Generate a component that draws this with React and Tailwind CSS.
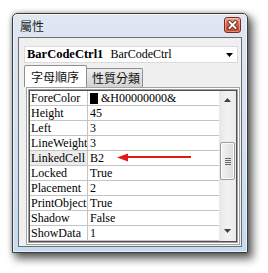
import React from "react";

const rows = [
  { name: "ForeColor", value: "&H00000000&", swatch: true },
  { name: "Height", value: "45" },
  { name: "Left", value: "3" },
  { name: "LineWeight", value: "3" },
  { name: "LinkedCell", value: "B2", sel: true },
  { name: "Locked", value: "True" },
  { name: "Placement", value: "2" },
  { name: "PrintObject", value: "True" },
  { name: "Shadow", value: "False" },
  { name: "ShowData", value: "1" },
];

function CloseButton() {
  return (
    <div className="mt-[3px] mr-[1px] w-[17px] h-[16px] rounded-[3px] border border-[#7a2a1c] bg-gradient-to-b from-[#eba795] via-[#d35a3f] to-[#c94a2e] flex items-center justify-center shadow-[inset_0_0_0_1px_rgba(255,255,255,0.35)]">
      <svg width="11" height="10" viewBox="0 0 11 10">
        <path d="M2.5 2 L8.5 8 M8.5 2 L2.5 8" stroke="#5a1a10" strokeWidth="3.6" strokeLinecap="square" />
        <path d="M2.5 2 L8.5 8 M8.5 2 L2.5 8" stroke="#ffffff" strokeWidth="2" strokeLinecap="square" />
      </svg>
    </div>
  );
}

function Scrollbar() {
  return (
    <div className="w-[17px] flex flex-col bg-gradient-to-r from-[#e6e6e6] via-[#f2f2f2] to-[#ebebeb]">
      <div className="h-[17px] flex items-center justify-center">
        <svg width="7" height="4" viewBox="0 0 7 4">
          <path d="M3.5 0 L7 4 L0 4 Z" fill="#404040" />
        </svg>
      </div>
      <div className="flex-1 pt-[34px] px-[1px]">
        <div className="h-[38px] rounded-[2px] border border-[#9c9c9c] bg-gradient-to-r from-[#f4f4f4] to-[#dcdcdc] flex flex-col items-center justify-center gap-[1px] shadow-[inset_0_0_0_1px_rgba(255,255,255,0.8)]">
          <div className="w-[6px] h-[1px] bg-[#6a6a6a]" />
          <div className="w-[6px] h-[1px] bg-[#6a6a6a]" />
          <div className="w-[6px] h-[1px] bg-[#6a6a6a]" />
          <div className="w-[6px] h-[1px] bg-[#6a6a6a]" />
        </div>
      </div>
      <div className="h-[17px] flex items-center justify-center pb-[3px]">
        <svg width="7" height="4" viewBox="0 0 7 4">
          <path d="M0 0 L7 0 L3.5 4 Z" fill="#404040" />
        </svg>
      </div>
    </div>
  );
}

export default function App() {
  return (
    <div className="relative w-[268px] h-[273px] bg-white pl-[12px] pt-[13px] overflow-hidden">
      <div className="w-[236px] h-[240px] border border-[#3c3c3c] rounded-t-[5px] bg-gradient-to-b from-[#dfe7f1] to-[#c6daf1] flex flex-col px-[5px] pb-[5px] shadow-[inset_0_0_0_1px_rgba(255,255,255,0.6),4px_5px_8px_1px_rgba(0,0,0,0.6),0_0_5px_rgba(0,0,0,0.3)]">
        {/* title bar */}
        <div className="h-[23px] flex items-start justify-between">
          <div className="ml-[2px] mt-[5px] text-[12px] leading-[14px] text-[#1e1e1e] font-['Noto_Sans_CJK_TC',sans-serif]">
            屬性
          </div>
          <CloseButton />
        </div>
        {/* client */}
        <div className="flex-1 border border-[#6e6e6e] bg-[#f0f0f0] flex flex-col">
          {/* combo */}
          <div className="mt-[8px] ml-[5px] mr-[3px] h-[17px] bg-white border border-[#dadada] flex items-center pl-[2px] pr-[4px] font-['Liberation_Serif',serif] text-[12px] leading-[15px] text-black">
            <span className="font-bold text-[12.5px]">BarCodeCtrl1</span>
            <span className="ml-[7px]">BarCodeCtrl</span>
            <div className="flex-1" />
            <svg width="7" height="4" viewBox="0 0 7 4">
              <path d="M0 0 L7 0 L3.5 4 Z" fill="#000" />
            </svg>
          </div>
          {/* tabs */}
          <div className="mt-[2px] ml-[5px] h-[22px] flex items-end font-['Noto_Sans_CJK_TC',sans-serif] text-[12px] leading-[14px] text-[#111]">
            <div className="w-[63px] h-[22px] bg-white border border-b-0 border-[#8e8f8f] rounded-t-[2px] pl-[6px] flex items-center">
              字母順序
            </div>
            <div className="w-[56px] h-[19px] bg-gradient-to-b from-[#ececec] to-[#d3d3d3] border border-l-0 border-b-0 border-[#8e8f8f] rounded-tr-[2px] pl-[5px] flex items-center">
              性質分類
            </div>
          </div>
          {/* panel */}
          <div className="ml-[7px] mr-[1px] border border-[#a3a3a3] p-[1px] bg-white">
            <div className="border border-[#a0a0a0]">
              <div className="border border-[#505050] bg-white flex">
                <div className="flex-1 flex flex-col relative font-['Liberation_Serif',serif] text-[12px] leading-[14px] text-black">
                  {rows.map((r) => (
                    <div key={r.name} className="h-[15px] flex border-b border-[#c4c4c4]">
                      <div className={`w-[57px] pl-[1px] whitespace-nowrap overflow-hidden ${r.sel ? "bg-[#ececec]" : ""}`}>
                        {r.name}
                      </div>
                      <div className="w-[1px] bg-[#c4c4c4]" />
                      <div className="flex-1 pl-[2px] flex items-center whitespace-nowrap">
                        {r.swatch && <div className="w-[8px] h-[11px] bg-black mr-[3px]" />}
                        <span>{r.value}</span>
                      </div>
                    </div>
                  ))}
                </div>
                <Scrollbar />
              </div>
            </div>
          </div>
        </div>
      </div>
      {/* red annotation arrow */}
      <svg className="absolute left-[115px] top-[150px]" width="80" height="16" viewBox="0 0 80 16">
        <path d="M12 7 L76 7" stroke="#e01a1a" strokeWidth="2.2" strokeLinecap="butt" />
        <path d="M2 7.5 L13 3.5 L13 11.5 Z" fill="#e01a1a" />
      </svg>
    </div>
  );
}
